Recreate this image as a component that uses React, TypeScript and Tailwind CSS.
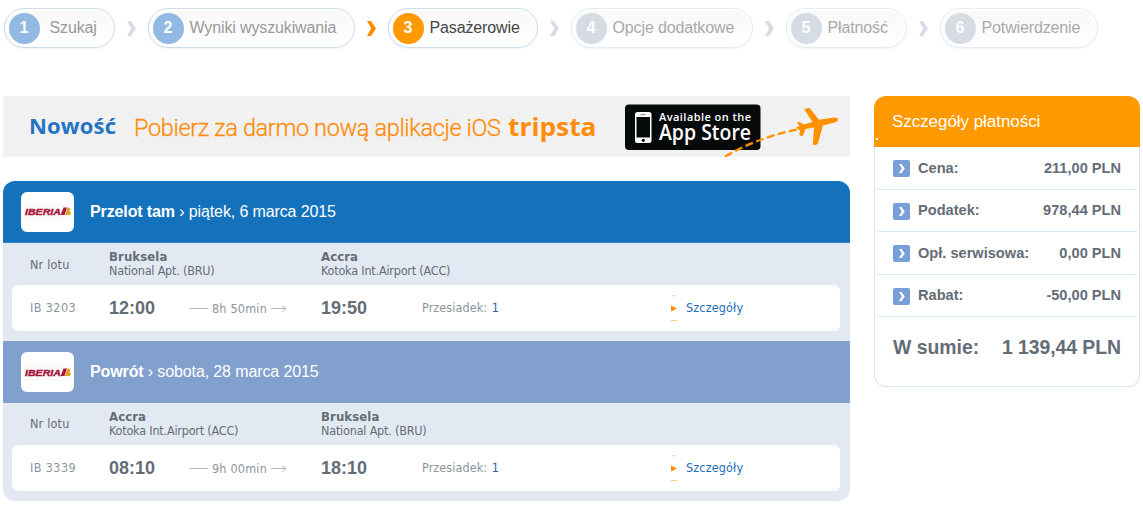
import React from "react";
import { clsx } from "clsx";

type StepStatus = "done" | "active" | "next";

interface Step {
  label: string;
  status: StepStatus;
  width: string;
}

interface Airport {
  city: string;
  name: string;
}

interface FlightProps {
  label: string;
  date: string;
  number: string;
  from: Airport;
  to: Airport;
  departure: string;
  arrival: string;
  duration: string;
  returning?: boolean;
}

const steps: Step[] = [
  { label: "Szukaj", status: "done", width: "w-[111px]" },
  { label: "Wyniki wyszukiwania", status: "done", width: "w-[207px]" },
  { label: "Pasażerowie", status: "active", width: "w-[150px]" },
  { label: "Opcje dodatkowe", status: "next", width: "w-[182px]" },
  { label: "Płatność", status: "next", width: "w-[121px]" },
  { label: "Potwierdzenie", status: "next", width: "w-[158px]" },
];

const brussels: Airport = { city: "Bruksela", name: "National Apt. (BRU)" };
const accra: Airport = { city: "Accra", name: "Kotoka Int.Airport (ACC)" };

const prices = [
  { label: "Cena:", value: "211,00 PLN", height: "h-[43px]" },
  { label: "Podatek:", value: "978,44 PLN", height: "h-[42px]" },
  { label: "Opł. serwisowa:", value: "0,00 PLN", height: "h-[43px]" },
  { label: "Rabat:", value: "-50,00 PLN", height: "h-[42px]" },
];

const StepArrow = ({ active }: { active: boolean }) => (
  <div className="flex w-[33px] justify-center">
    <svg className="mt-px" width="9" height="15" viewBox="0 0 9 15">
      <path d="M0 0h4l5 7.500L4 15H0l4.200-7.500z" fill={active ? "#ff8c00" : "#d5dce3"} />
    </svg>
  </div>
);

const Steps = () => (
  <ol className="flex items-center pt-2 pl-1">
    {steps.map((step, i) => (
      <li key={step.label} className="flex items-center">
        {i > 0 && <StepArrow active={step.status === "active"} />}
        <div
          className={clsx(
            "flex h-10 items-center rounded-full border bg-linear-to-b from-[#f8f8f8] to-white pl-[3.500px] shadow-[inset_0_0_0_2px_#fff,0_1px_2px_#eef2f5]",
            step.width,
            step.status === "next" ? "border-[#e6ecef]" : "border-[#ccdcea]"
          )}>
          <span
            className={clsx(
              "flex h-[31px] w-[31px] shrink-0 items-center justify-center rounded-full text-base font-bold text-white",
              step.status === "done" && "bg-[#91b9e2]",
              step.status === "active" && "bg-[#ff9900]",
              step.status === "next" && "bg-[#d5dce3]"
            )}>
            {i + 1}
          </span>
          <span
            className={clsx(
              "text-base tracking-[-0.13px] whitespace-nowrap",
              i === 0 ? "ml-2.5" : "ml-1.5",
              step.status === "done" && "text-[#999]",
              step.status === "active" && "text-[#444]",
              step.status === "next" && "text-[#a9a9a9]"
            )}>
            {step.label}
          </span>
        </div>
      </li>
    ))}
  </ol>
);

const Banner = () => (
  <svg className="block bg-[#f1f1f1]" width="847" height="61" viewBox="0 0 847 61">
    <text x="26" y="38" textLength="87" fontFamily="'Open Sans', sans-serif" fontWeight="700" fontSize="22" fill="#2474c6">
      Nowość
    </text>
    <text x="131" y="39.500" textLength="367" fontFamily="Roboto, sans-serif" fontWeight="300" fontSize="23.500" fill="#ff8c0a" stroke="#ff8c0a" strokeWidth="0.300">
      Pobierz za darmo nową aplikacje iOS
    </text>
    <text x="505" y="39.500" textLength="88.500" lengthAdjust="spacingAndGlyphs" fontFamily="'Open Sans', sans-serif" fontWeight="700" fontSize="25" fill="#ff8c0a">
      tripsta
    </text>
    <rect x="622" y="8.500" width="135.500" height="45.500" rx="4" fill="#060a0b" />
    <rect x="632" y="16" width="16.500" height="31" rx="2.500" fill="#fff" />
    <rect x="633.500" y="21" width="13.500" height="20.500" fill="#060a0b" />
    <rect x="637.500" y="18.200" width="5" height="1" fill="#777" />
    <circle cx="640.300" cy="44.300" r="1.600" fill="#060a0b" />
    <text x="656" y="24.500" textLength="92" fontFamily="'Open Sans', sans-serif" fontWeight="600" fontSize="11" fill="#fff">
      Available on the
    </text>
    <text x="656" y="44.300" textLength="92" lengthAdjust="spacingAndGlyphs" fontFamily="'Open Sans', sans-serif" fontWeight="600" fontSize="21" fill="#fff">
      App Store
    </text>
    <path d="M722 60.500Q758 40 797 33" fill="none" stroke="#ff9100" strokeWidth="2.300" strokeDasharray="8 3.500" />
    <path
      d="M801.200 13.200L805 12Q806.500 11.800 807.500 13L816 23.700L831 21.600Q835 21.600 835 23.600Q835 25.800 831.500 26.600L820 29.600L815 47Q814.500 48.700 813 48.800L809.800 49L811 31.500L802.500 33L800 39.500Q799.500 40.500 796.300 39.300L797 34.500L792.800 31.500L796.500 30L794 26.700L796 25.800L801 28.600L809.500 26z"
      fill="#ff9100"
    />
  </svg>
);

const AirlineLogo = () => (
  <div className="flex h-10 w-[53px] items-center justify-center rounded-md bg-white">
    <svg width="47" height="17" viewBox="0 0 47 17">
      <rect width="47" height="17" fill="#fafafa" />
      <text x="1" y="12" textLength="36" lengthAdjust="spacingAndGlyphs" fontFamily="'Liberation Sans', sans-serif" fontWeight="700" fontStyle="italic" fontSize="9" fill="#a9153b" stroke="#a9153b" strokeWidth="0.400">
        IBERIA
      </text>
      <path d="M39.500 4.500h3.500l-2.500 7.500h-3.800z" fill="#a9153b" />
      <path d="M43.500 4.500c3 0 3.500 2.600 1.800 3.500 2.500 1.200 1.500 4-1 4h-3.300z" fill="#e0a21c" />
    </svg>
  </div>
);

const AirportCell: React.FC<{ airport: Airport; className?: string }> = ({ airport, className }) => (
  <div className={clsx("pt-[7px] text-[12.500px] leading-[14px] tracking-[-0.2px] whitespace-nowrap", className)}>
    <p className="text-[13px] tracking-[0.1px] font-bold">{airport.city}</p>
    <p>{airport.name}</p>
  </div>
);

const Time = ({ value, className }: { value: string; className: string }) => (
  <b className={clsx("font-['Liberation_Sans',Arial,sans-serif] text-lg text-[#646c77]", className)}>{value}</b>
);

const Flight: React.FC<FlightProps> = ({ label, date, number, from, to, departure, arrival, duration, returning }) => (
  <section className="bg-[#e3e9f3] font-['DejaVu_Sans_Condensed','DejaVu_Sans',sans-serif] text-[#646c77]">
    <header
      className={clsx(
        "flex h-[62px] items-center pl-[18px] font-['Liberation_Sans',Arial,sans-serif] text-base text-white",
        returning ? "bg-[#81a0ce]" : "border-b border-[#3484c6] bg-[#1472bd]"
      )}>
      <AirlineLogo />
      <h2 className="ml-4 tracking-[-0.12px] whitespace-nowrap">
        <b>{label}</b> › {date}
      </h2>
    </header>
    <div className="flex h-[42px]">
      <span className={clsx("w-[106px] pl-[27px] text-[12.500px] leading-5 tracking-[0.2px]", returning ? "pt-[11px]" : "pt-3")}>
        Nr lotu
      </span>
      <AirportCell airport={from} className="w-[212px]" />
      <AirportCell airport={to} />
    </div>
    <div className="mr-2.5 ml-[9px] flex h-[46px] items-center rounded-md bg-white text-[12.500px] whitespace-nowrap text-[#8e949c]">
      <span className="w-[97px] pt-px pl-[18px] tracking-[0.4px]">{number}</span>
      <Time value={departure} className="w-[81px]" />
      <div className="flex w-[131px] items-center pt-0.5">
        <svg width="18" height="9" viewBox="0 0 18 9">
          <path d="M0 3.500h18" stroke="#b5b8bb" />
        </svg>
        <span className="w-[63px] text-center tracking-[0.2px]">{duration}</span>
        <svg width="16" height="9" viewBox="0 0 16 9">
          <path d="M0 3.500h15M11.500 0.500l3.500 3-3.500 3" fill="none" stroke="#b5b8bb" />
        </svg>
      </div>
      <Time value={arrival} className="w-[101px]" />
      <span className="w-[249px] pt-px tracking-[0.08px]">
        Przesiadek: <span className="ml-px text-[#1e66b4]">1</span>
      </span>
      <button type="button" className="flex items-center gap-[9px] tracking-[0.15px] text-[#1e6cb8]">
        <svg width="6" height="26" viewBox="0 0 6 26">
          <path d="M1 0h4L3 2z" fill="#d5d5e4" />
          <path d="M0 10.500l6 3-6 3z" fill="#ff8c00" />
          <path d="M0 25.500h6" stroke="#ffc68a" />
        </svg>
        <span className="pt-px">Szczegóły</span>
      </button>
    </div>
  </section>
);

const PaymentDetails = () => (
  <aside className="w-[266px] font-bold text-[#646c77]">
    <h3 className="h-[51px] rounded-t-xl bg-[#ff9900] pl-[18px] text-[16.900px] leading-[51px] font-normal text-white">
      Szczegóły płatności
      <span className="-mt-[9px] -ml-4 block h-[2px] w-[2px] bg-white" />
    </h3>
    <div className="h-60 rounded-b-xl border border-t-0 border-[#d6e4f0]">
      {prices.map((price) => (
        <div
          key={price.label}
          className={clsx("mx-px flex items-center rounded-b border-b border-[#d6e4f0] pt-px pr-[17px] pl-[17px] text-[14.600px]", price.height)}>
          <svg className="mr-2" width="17" height="17" viewBox="0 0 17 17">
            <rect width="17" height="17" rx="2" fill="#789fd7" />
            <path d="M6 4h2.500l3.300 4.500L8.500 13H6l2.800-4.500z" fill="#fff" />
          </svg>
          <span>{price.label}</span>
          <span className="ml-auto">{price.value}</span>
        </div>
      ))}
      <div className="flex h-[62px] items-center justify-between pr-[18px] pl-[18px] text-[19.400px] whitespace-nowrap">
        <span>W sumie:</span>
        <span className="tracking-[-0.05px]">1 139,44 PLN</span>
      </div>
    </div>
  </aside>
);

export default function App() {
  return (
    <main className="h-[508px] w-[1143px] overflow-hidden bg-white font-['Liberation_Sans',Arial,sans-serif]">
      <Steps />
      <div className="mt-12 flex gap-6 pl-[3px]">
        <div className="w-[847px]">
          <Banner />
          <div className="mt-6 h-[320px] overflow-hidden rounded-xl bg-[#e3e9f3]">
            <Flight
              label="Przelot tam"
              date="piątek, 6 marca 2015"
              number="IB 3203"
              from={brussels}
              to={accra}
              departure="12:00"
              arrival="19:50"
              duration="8h 50min"
            />
            <div className="h-2.5" />
            <Flight
              label="Powrót"
              date="sobota, 28 marca 2015"
              number="IB 3339"
              from={accra}
              to={brussels}
              departure="08:10"
              arrival="18:10"
              duration="9h 00min"
              returning
            />
          </div>
        </div>
        <PaymentDetails />
      </div>
    </main>
  );
}
